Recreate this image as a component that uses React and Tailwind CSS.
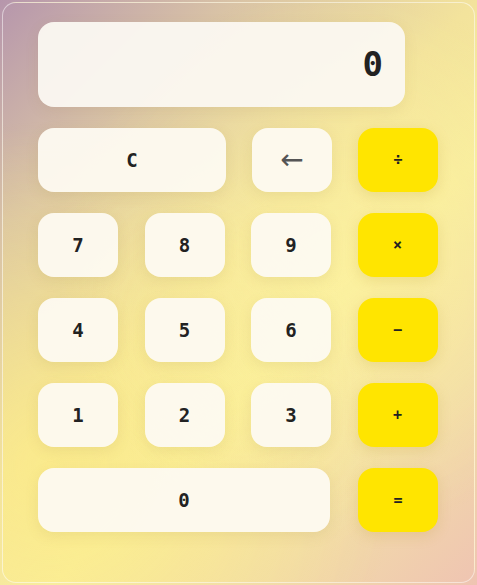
import React, { useState } from "react";

const digitBtn =
  "h-16 rounded-2xl bg-[#fdfaf1]/95 text-[#222] font-bold text-[19px] shadow-[0_4px_14px_rgba(150,120,60,0.12)] flex items-center justify-center";
const opBtn =
  "w-20 h-16 rounded-2xl bg-[#ffe500] text-[#222] font-bold text-[15px] shadow-[0_4px_14px_rgba(180,140,20,0.18)] flex items-center justify-center";

const Calculator = () => {
  const [display, setDisplay] = useState("0");

  const press = (v) => {
    if (v === "C") return setDisplay("0");
    if (v === "back") return setDisplay(display.length > 1 ? display.slice(0, -1) : "0");
    setDisplay(display === "0" ? v : display + v);
  };

  return (
    <div
      className="w-[477px] h-[585px] p-[2px] bg-[linear-gradient(135deg,#b696ac_0%,#d9c3a6_22%,#f3e39c_45%,#f8ec9e_60%,#f2dca8_80%,#efc4b2_100%)]"
      style={{ fontFamily: '"DejaVu Sans Mono", monospace' }}
    >
      <div className="h-full rounded-[14px] border border-white/50 bg-[radial-gradient(circle_at_70%_45%,rgba(255,245,160,0.55),transparent_60%),radial-gradient(circle_at_10%_80%,rgba(255,238,130,0.6),transparent_55%)] pt-[19px] pl-[35px]">
        {/* Display */}
        <div className="w-[367px] h-[85px] rounded-2xl bg-[#fbf8f1]/95 flex items-center justify-end pr-[22px] text-[34px] font-bold text-[#222] shadow-[0_4px_14px_rgba(150,120,60,0.1)]">
          {display}
        </div>

        {/* Keys */}
        <div className="mt-[21px] flex flex-col gap-[21px]">
          <div className="flex">
            <button onClick={() => press("C")} className={`${digitBtn} w-[188px]`}>
              C
            </button>
            <button
              onClick={() => press("back")}
              className={`${digitBtn} w-20 ml-[26px] font-normal text-[28px] text-[#555]`}
              style={{ fontFamily: '"DejaVu Sans", sans-serif' }}
            >
              ←
            </button>
            <button className={`${opBtn} ml-[26px]`}>÷</button>
          </div>

          <div className="flex gap-[26.5px]">
            {["7", "8", "9"].map((d) => (
              <button key={d} onClick={() => press(d)} className={`${digitBtn} w-20`}>
                {d}
              </button>
            ))}
            <button className={opBtn}>×</button>
          </div>

          <div className="flex gap-[26.5px]">
            {["4", "5", "6"].map((d) => (
              <button key={d} onClick={() => press(d)} className={`${digitBtn} w-20`}>
                {d}
              </button>
            ))}
            <button className={opBtn}>−</button>
          </div>

          <div className="flex gap-[26.5px]">
            {["1", "2", "3"].map((d) => (
              <button key={d} onClick={() => press(d)} className={`${digitBtn} w-20`}>
                {d}
              </button>
            ))}
            <button className={opBtn}>+</button>
          </div>

          <div className="flex">
            <button onClick={() => press("0")} className={`${digitBtn} w-[292px]`}>
              0
            </button>
            <button className={`${opBtn} ml-[28px]`}>=</button>
          </div>
        </div>
      </div>
    </div>
  );
};

export default function App() {
  return <Calculator />;
}
